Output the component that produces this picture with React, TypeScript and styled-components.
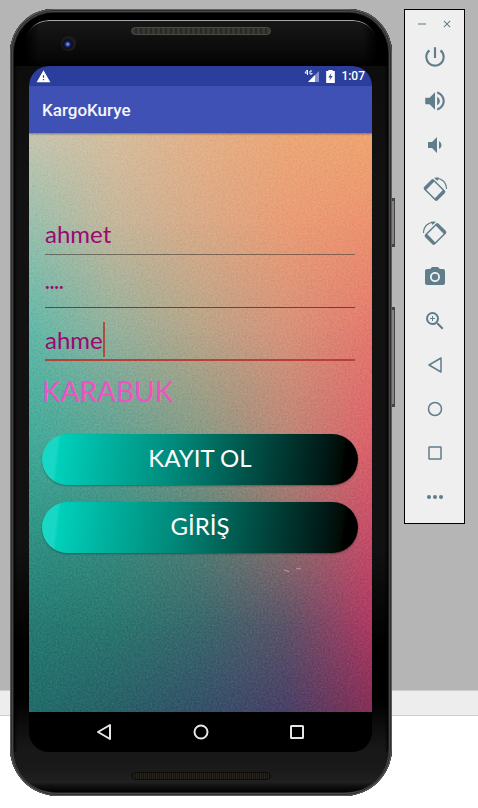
import React from "react";
import styled, { createGlobalStyle } from "styled-components";
import {
  MdClose,
  MdPhotoCamera,
  MdPowerSettingsNew,
  MdVolumeDown,
  MdVolumeUp,
  MdWarning,
  MdZoomIn,
} from "react-icons/md";

const GlobalStyle = createGlobalStyle`
  * { box-sizing: border-box; }
  body { margin: 0; background: #fff; font-family: Roboto, sans-serif; }
  button, input { font: inherit; color: inherit; border: 0; padding: 0; margin: 0; background: none; outline: 0; }
  button { cursor: pointer; }
  svg { display: block; }
`;

const Desk = styled.div`
  display: flex;
  align-items: flex-start;
  gap: 12px;
  min-height: 100vh;
  padding: 9px 13px 12px 10px;
  background: linear-gradient(
    #b5b5b5 690px,
    #cfcfcf 690px 691px,
    #ededed 691px 715px,
    #cdcdcd 715px 716px,
    #fff 716px
  );
`;

const Phone = styled.main`
  position: relative;
  flex: 1;
  min-width: 0;
  padding: 4px;
  border-radius: 44px 44px 48px 48px;
  background: linear-gradient(#000, #0d0d0d 60px, #121212 180px, #111 540px, #000 640px, #000 690px, #181818 740px, #1c1c1c);
  box-shadow:
    inset 0 0 0 1px #5c5c5c,
    inset 0 0 0 2px #303030,
    inset 0 0 0 3px #464646,
    inset 0 0 0 4px #1e1e1e,
    inset 0 0 3px 5px #000;
`;

const SideKey = styled.span<{ $top: number; $length: number }>`
  position: absolute;
  right: -3px;
  top: ${(p) => p.$top}px;
  width: 3px;
  height: ${(p) => p.$length}px;
  border: solid #444;
  border-width: 3px 1px 3px 0;
  background: #8a8280;
`;

const TopBezel = styled.div`
  height: 53px;
  padding: 7px 11px 0;
  border-radius: 40px 40px 0 0;
  background: #000;
`;

const Face = styled.div`
  display: grid;
  grid-template-columns: 1fr auto 1fr;
  align-items: start;
  height: 46px;
  border-top: 1px solid #a8a8a8;
  border-radius: 24px 24px 0 0;
  background: linear-gradient(#171717, #060606 40px, #000);
  mask-image: linear-gradient(90deg, transparent, #000 14px calc(100% - 14px), transparent);
`;

const Lens = styled.span`
  width: 15px;
  height: 15px;
  margin: 15px 0 0 36px;
  border-radius: 50%;
  background: radial-gradient(circle at 45% 55%, #6c8ce0 0 1px, #223688 2px, #0a0c1c 4px, #1b1b1d 6px, #232323);
`;

const Grille = styled.span<{ $dim?: boolean }>`
  width: 140px;
  height: 8px;
  border: 1px solid ${(p) => (p.$dim ? "#0c0c0c" : "#4c4a47")};
  border-radius: 4px;
  background: ${(p) =>
    p.$dim
      ? "repeating-linear-gradient(90deg, #26241d 0 1px, #141310 1px 2px)"
      : "repeating-linear-gradient(90deg, #3a3833 0 3px, #2a2824 3px 5px)"};
`;

const EarGrille = styled(Grille)`
  margin-top: 6px;
`;

const BottomBezel = styled.div`
  display: flex;
  justify-content: center;
  height: 40px;
  padding-top: 20px;
  border-radius: 0 0 42px 42px;
  background: linear-gradient(#171717, #1a1a1a 18px, #202020 30px, #111 34px, #000);
`;

const Screen = styled.section`
  margin: 0 16px 0 15px;
  border-radius: 20px;
  overflow: hidden;
  background: #000;
`;

const StatusBar = styled.header`
  display: flex;
  align-items: center;
  gap: 6px;
  height: 20px;
  padding: 0 7px;
  background: #2b3e9b;
  color: #fff;
  font-size: 12px;
  font-weight: 500;
`;

const StatusGap = styled.span`
  flex: 1;
`;

const AppBar = styled.div`
  position: relative;
  display: flex;
  align-items: center;
  height: 47px;
  padding: 0 13px;
  background: #3f51b5;
  box-shadow: 0 1px 2px rgba(0, 0, 0, 0.4);
  z-index: 1;
`;

const Title = styled.h1`
  margin: 0;
  color: #f5f5fb;
  font-size: 17px;
  font-weight: 500;
`;

const Content = styled.form`
  position: relative;
  isolation: isolate;
  display: flex;
  flex-direction: column;
  padding: 69px 14px 159px 13px;
  font-family: Lato, sans-serif;
`;

const Wallpaper = styled.svg`
  position: absolute;
  inset: 0;
  z-index: -1;
  width: 100%;
  height: 100%;
`;

const Grain = styled.rect`
  mix-blend-mode: soft-light;
`;

const Field = styled.label<{ $focused?: boolean; $strong?: boolean }>`
  display: flex;
  align-items: center;
  height: 53px;
  margin: 0 3px;
  padding-top: 12px;
  border-bottom: ${(p) =>
    p.$focused
      ? "2px solid #b8403a"
      : p.$strong
        ? "1px solid rgba(50, 50, 50, 0.75)"
        : "1px solid rgba(70, 60, 50, 0.6)"};
  color: #9c0872;
`;

const Entry = styled.input<{ $dots?: boolean }>`
  field-sizing: content;
  min-width: 20px;
  max-width: 100%;
  font-size: ${(p) => (p.$dots ? 8 : 24)}px;
  line-height: 32px;
`;

const Caret = styled.span`
  width: 2px;
  height: 35px;
  background: #a8503f;
`;

const City = styled.p`
  margin: 10px 0 23px;
  color: #f052c4;
  font-size: 28px;
  line-height: 40px;
`;

const PillButton = styled.button`
  height: 51px;
  padding-bottom: 4px;
  border-radius: 26px;
  background: linear-gradient(
    97deg,
    #18d7c4 5%,
    #00d0bb 6%,
    #00b3a0 20%,
    #00897a 42%,
    #005c51 61%,
    #00332d 78%,
    #001613 90%,
    #020a03 94%,
    #000 95%
  );
  box-shadow: 0 1px 2px rgba(0, 0, 0, 0.35);
  color: #fff;
  font-size: 24px;

  & + & {
    margin-top: 17px;
  }
`;

const NavBar = styled.nav`
  display: flex;
  align-items: center;
  justify-content: space-between;
  height: 40px;
  padding: 0 67px;
  color: #e6e6e6;
`;

const Panel = styled.aside`
  display: flex;
  flex-direction: column;
  align-items: stretch;
  width: 61px;
  padding-bottom: 4px;
  border: 1px solid #000;
  background: #efefef;
  color: #607d8b;
`;

const PanelHead = styled.div`
  display: flex;
  align-items: center;
  justify-content: space-between;
  height: 25px;
  padding: 3px 11px 0;
`;

const Tool = styled.button`
  display: flex;
  align-items: center;
  justify-content: center;
  height: 44px;
`;

const SmallTool = styled(Tool)`
  height: 14px;
`;

const mesh: { y: number; colors: string[] }[] = [
  { y: 0, colors: ["#c6c6b0", "#d6be9e", "#e4b088", "#eba878", "#efa572"] },
  { y: 90, colors: ["#98c0ae", "#c6b69b", "#d9ab88", "#e99d76", "#ec936f"] },
  { y: 200, colors: ["#60b8a8", "#94b19c", "#b8a589", "#d6937b", "#e4786e"] },
  { y: 310, colors: ["#41ab9a", "#5fa192", "#879b86", "#ba8776", "#dd616b"] },
  { y: 400, colors: ["#2f9485", "#378c81", "#547f76", "#906f6e", "#c94c68"] },
  { y: 490, colors: ["#267b73", "#2b776f", "#39696d", "#5d5368", "#b03962"] },
  { y: 578, colors: ["#226c6b", "#286068", "#345069", "#494067", "#852f56"] },
];

function WallpaperArt() {
  return (
    <Wallpaper viewBox="0 0 343 578" preserveAspectRatio="none" aria-hidden="true">
      <defs>
        {mesh.map((row, i) => (
          <React.Fragment key={row.y}>
            <linearGradient id={`row${i}`}>
              {row.colors.map((c, k) => (
                <stop key={k} offset={k / 4} stopColor={c} />
              ))}
            </linearGradient>
            {i > 0 && (
              <>
                <linearGradient id={`fade${i}`} gradientUnits="userSpaceOnUse" x1="0" x2="0" y1={mesh[i - 1].y} y2={row.y}>
                  <stop offset="0" stopColor="#fff" stopOpacity="0" />
                  <stop offset="1" stopColor="#fff" />
                </linearGradient>
                <mask id={`mask${i}`} maskUnits="userSpaceOnUse" x="0" y="0" width="343" height="578">
                  <rect width="343" height="578" fill={`url(#fade${i})`} />
                </mask>
              </>
            )}
          </React.Fragment>
        ))}
        <filter id="grain" x="0" y="0" width="100%" height="100%" colorInterpolationFilters="sRGB">
          <feTurbulence type="fractalNoise" baseFrequency="0.55" numOctaves="3" seed="4" />
          <feColorMatrix values="1 0 0 0 0  1 0 0 0 0  1 0 0 0 0  0 0 0 0 1" />
        </filter>
      </defs>
      {mesh.map((row, i) => (
        <rect key={row.y} width="343" height="578" fill={`url(#row${i})`} mask={i ? `url(#mask${i})` : undefined} />
      ))}
      <Grain width="343" height="578" filter="url(#grain)" opacity="0.28" />
      <path d="M255 436l5 2M267 435h5" stroke="#e0aaa8" strokeWidth="1" opacity="0.7" />
    </Wallpaper>
  );
}

function SignalIcon() {
  return (
    <svg width="16" height="14" viewBox="0 0 16 14" aria-hidden="true">
      <path d="M15 2v11H4z" fill="#8290cc" />
      <path d="M11 6v7H4z" fill="#fff" />
      <path d="M3 1L1 4h3M3.500 1v5M8 2H6v3h2V4" fill="none" stroke="#fff" strokeWidth="1" />
    </svg>
  );
}

function BatteryIcon() {
  return (
    <svg width="9" height="13" viewBox="0 0 8 12" aria-hidden="true">
      <path d="M2 1V0h4v1h2v11H0V1z" fill="#fff" />
      <path d="M5 2.500L2 7h2l-1 3 3-4.500H4z" fill="#2b3e9b" />
    </svg>
  );
}

function BackIcon({ width = 1.5 }: { width?: number }) {
  return (
    <svg width="16" height="18" viewBox="0 0 16 18" fill="none" stroke="currentColor" strokeWidth={width} aria-hidden="true">
      <path d="M14 2v14L2 9z" strokeLinejoin="round" />
    </svg>
  );
}

function HomeIcon({ width = 1.5 }: { width?: number }) {
  return (
    <svg width="16" height="16" viewBox="0 0 16 16" fill="none" stroke="currentColor" strokeWidth={width} aria-hidden="true">
      <circle cx="8" cy="8" r="6.500" />
    </svg>
  );
}

function RecentIcon({ width = 1.5 }: { width?: number }) {
  return (
    <svg width="16" height="16" viewBox="0 0 16 16" fill="none" stroke="currentColor" strokeWidth={width} aria-hidden="true">
      <rect x="2" y="2" width="12" height="12" rx="0.500" />
    </svg>
  );
}

const MirrorIcon = styled.svg<{ $flip?: boolean }>`
  transform: ${(p) => (p.$flip ? "scaleX(-1)" : "none")};
`;

function RotateIcon({ flip }: { flip?: boolean }) {
  return (
    <MirrorIcon $flip={flip} width="26" height="26" viewBox="0 0 26 26" fill="currentColor" aria-hidden="true">
      <path
        transform="rotate(45 12.500 14)"
        fillRule="evenodd"
        d="M5 7h15a2 2 0 0 1 2 2v10a2 2 0 0 1-2 2H5a2 2 0 0 1-2-2V9a2 2 0 0 1 2-2zM6.500 8.500v11h12v-11z"
      />
      <path d="M13 2.500C19 1.500 24.500 6 24.500 13" fill="none" stroke="currentColor" strokeWidth="1.200" />
      <path d="M12 1.800l5-.3-1.500 3.500z" />
    </MirrorIcon>
  );
}

function MoreIcon() {
  return (
    <svg width="18" height="6" viewBox="0 0 18 6" fill="currentColor" aria-hidden="true">
      <circle cx="3" cy="3" r="2" />
      <circle cx="9" cy="3" r="2" />
      <circle cx="15" cy="3" r="2" />
    </svg>
  );
}

const tools: { label: string; icon: React.ReactNode }[] = [
  { label: "Power", icon: <MdPowerSettingsNew size={26} /> },
  { label: "Volume up", icon: <MdVolumeUp size={26} /> },
  { label: "Volume down", icon: <MdVolumeDown size={24} /> },
  { label: "Rotate left", icon: <RotateIcon /> },
  { label: "Rotate right", icon: <RotateIcon flip /> },
  { label: "Take screenshot", icon: <MdPhotoCamera size={24} /> },
  { label: "Zoom", icon: <MdZoomIn size={24} /> },
  { label: "Back", icon: <BackIcon /> },
  { label: "Home", icon: <HomeIcon /> },
  { label: "Overview", icon: <RecentIcon /> },
  { label: "More", icon: <MoreIcon /> },
];

export default function App() {
  return (
    <>
      <GlobalStyle />
      <Desk>
        <Phone>
          <SideKey $top={189} $length={49} />
          <SideKey $top={298} $length={100} />
          <TopBezel>
            <Face>
              <Lens />
              <EarGrille />
            </Face>
          </TopBezel>
          <Screen>
            <StatusBar>
              <MdWarning size={15} aria-hidden="true" />
              <StatusGap />
              <SignalIcon />
              <BatteryIcon />
              <time>1:07</time>
            </StatusBar>
            <AppBar>
              <Title>KargoKurye</Title>
            </AppBar>
            <Content lang="tr" onSubmit={(e) => e.preventDefault()}>
              <WallpaperArt />
              <Field>
                <Entry aria-label="Ad" defaultValue="ahmet" />
              </Field>
              <Field $strong>
                <Entry $dots type="password" aria-label="Parola" defaultValue="1234" />
              </Field>
              <Field $focused>
                <Entry aria-label="Kullanıcı" defaultValue="ahme" />
                <Caret />
              </Field>
              <City>KARABUK</City>
              <PillButton type="submit">KAYIT OL</PillButton>
              <PillButton type="button">GİRİŞ</PillButton>
            </Content>
            <NavBar>
              <button type="button" aria-label="Back">
                <BackIcon width={2} />
              </button>
              <button type="button" aria-label="Home">
                <HomeIcon width={2} />
              </button>
              <button type="button" aria-label="Overview">
                <RecentIcon width={2} />
              </button>
            </NavBar>
          </Screen>
          <BottomBezel>
            <Grille $dim />
          </BottomBezel>
        </Phone>
        <Panel>
          <PanelHead>
            <SmallTool type="button" aria-label="Minimize">
              <svg width="12" height="12" viewBox="0 0 12 12" aria-hidden="true">
                <path d="M2 6h8" stroke="#a3b3bb" strokeWidth="2" />
              </svg>
            </SmallTool>
            <SmallTool type="button" aria-label="Close">
              <MdClose size={12} />
            </SmallTool>
          </PanelHead>
          {tools.map((t) => (
            <Tool key={t.label} type="button" aria-label={t.label}>
              {t.icon}
            </Tool>
          ))}
        </Panel>
      </Desk>
    </>
  );
}
